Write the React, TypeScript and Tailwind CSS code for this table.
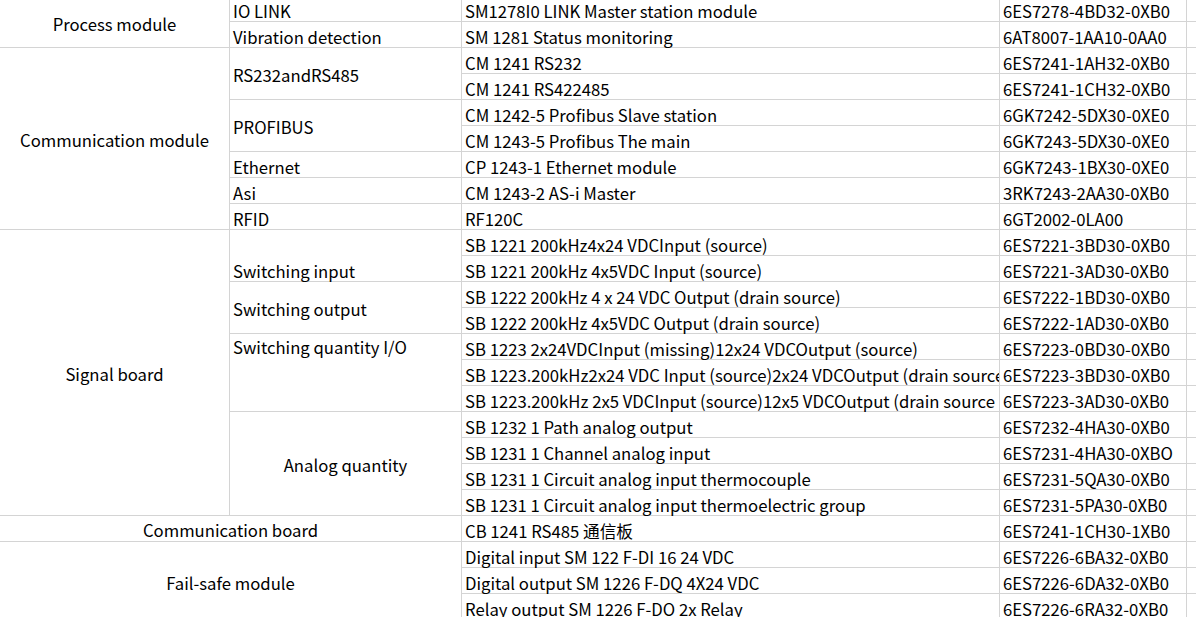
import React from "react";

type R = { c: string; d: string };

const rows: R[] = [
  { c: "SM1278I0 LINK Master station module", d: "6ES7278-4BD32-0XB0" },
  { c: "SM 1281 Status monitoring", d: "6AT8007-1AA10-0AA0" },
  { c: "CM 1241 RS232", d: "6ES7241-1AH32-0XB0" },
  { c: "CM 1241 RS422485", d: "6ES7241-1CH32-0XB0" },
  { c: "CM 1242-5 Profibus Slave station", d: "6GK7242-5DX30-0XE0" },
  { c: "CM 1243-5 Profibus The main", d: "6GK7243-5DX30-0XE0" },
  { c: "CP 1243-1 Ethernet module", d: "6GK7243-1BX30-0XE0" },
  { c: "CM 1243-2 AS-i Master", d: "3RK7243-2AA30-0XB0" },
  { c: "RF120C", d: "6GT2002-0LA00" },
  { c: "SB 1221 200kHz4x24 VDCInput (source)", d: "6ES7221-3BD30-0XB0" },
  { c: "SB 1221 200kHz 4x5VDC Input (source)", d: "6ES7221-3AD30-0XB0" },
  { c: "SB 1222 200kHz 4 x 24 VDC Output (drain source)", d: "6ES7222-1BD30-0XB0" },
  { c: "SB 1222 200kHz 4x5VDC Output (drain source)", d: "6ES7222-1AD30-0XB0" },
  { c: "SB 1223 2x24VDCInput (missing)12x24 VDCOutput (source)", d: "6ES7223-0BD30-0XB0" },
  { c: "SB 1223.200kHz2x24 VDC Input (source)2x24 VDCOutput (drain source)", d: "6ES7223-3BD30-0XB0" },
  { c: "SB 1223.200kHz 2x5 VDCInput (source)12x5 VDCOutput (drain source", d: "6ES7223-3AD30-0XB0" },
  { c: "SB 1232 1 Path analog output", d: "6ES7232-4HA30-0XB0" },
  { c: "SB 1231 1 Channel analog input", d: "6ES7231-4HA30-0XBO" },
  { c: "SB 1231 1 Circuit analog input thermocouple", d: "6ES7231-5QA30-0XB0" },
  { c: "SB 1231 1 Circuit analog input thermoelectric group", d: "6ES7231-5PA30-0XB0" },
  { c: "CB 1241 RS485 通信板", d: "6ES7241-1CH30-1XB0" },
  { c: "Digital input SM 122 F-DI 16 24 VDC", d: "6ES7226-6BA32-0XB0" },
  { c: "Digital output SM 1226 F-DQ 4X24 VDC", d: "6ES7226-6DA32-0XB0" },
  { c: "Relay output SM 1226 F-DO 2x Relay", d: "6ES7226-6RA32-0XB0" },
];

const cell = "border-r border-b border-[#d4d4d4] overflow-x-clip whitespace-nowrap";
const bottom = "flex items-end pl-[3px]";
const mid = "flex items-center pt-[3px]";

export default function App() {
  return (
    <div
      className="h-[617px] w-[1196px] overflow-hidden bg-white text-black text-[16.7px] leading-[19px]"
      style={{ fontFamily: '"Noto Sans CJK SC", "Noto Sans", sans-serif' }}
    >
      <div className="mt-[-4px] grid grid-cols-[230px_232px_538px_187px_1fr] grid-rows-[repeat(24,26px)]">
        {/* Column A / merged A+B */}
        <div className={`${cell} ${mid} col-start-1 row-start-1 row-span-2 justify-center pt-[5px]`}>Process module</div>
        <div className={`${cell} ${mid} col-start-1 row-start-3 row-span-7 justify-center`}>Communication module</div>
        <div className={`${cell} ${mid} col-start-1 row-start-10 row-span-11 justify-center`}>Signal board</div>
        <div className={`${cell} col-start-1 col-span-2 row-start-21 flex items-end justify-center pb-[1px]`}>Communication board</div>
        <div className={`${cell} ${mid} col-start-1 col-span-2 row-start-22 row-span-3 justify-center pt-[5px]`}>Fail-safe module</div>

        {/* Column B */}
        <div className={`${cell} ${bottom} col-start-2 row-start-1`}>IO LINK</div>
        <div className={`${cell} ${bottom} col-start-2 row-start-2`}>Vibration detection</div>
        <div className={`${cell} ${mid} col-start-2 row-start-3 row-span-2 pl-[3px]`}>RS232andRS485</div>
        <div className={`${cell} ${mid} col-start-2 row-start-5 row-span-2 pl-[3px]`}>PROFIBUS</div>
        <div className={`${cell} ${bottom} col-start-2 row-start-7`}>Ethernet</div>
        <div className={`${cell} ${bottom} col-start-2 row-start-8`}>Asi</div>
        <div className={`${cell} ${bottom} col-start-2 row-start-9`}>RFID</div>
        <div className={`${cell} ${bottom} col-start-2 row-start-10 row-span-2`}>Switching input</div>
        <div className={`${cell} ${mid} col-start-2 row-start-12 row-span-2 pl-[3px]`}>Switching output</div>
        <div className={`${cell} col-start-2 row-start-14 row-span-3 flex items-start pl-[3px] pt-[4px]`}>Switching quantity I/O</div>
        <div className={`${cell} ${mid} col-start-2 row-start-17 row-span-4 justify-center`}>Analog quantity</div>

        {/* Columns C, D, E */}
        {rows.map((r, i) => (
          <React.Fragment key={i}>
            <div className={`${cell} ${bottom} col-start-3`} style={{ gridRowStart: i + 1 }}>
              {r.c}
            </div>
            <div className={`${cell} ${bottom} col-start-4`} style={{ gridRowStart: i + 1 }}>
              {r.d}
            </div>
            <div className="border-b border-[#d4d4d4] col-start-5" style={{ gridRowStart: i + 1 }} />
          </React.Fragment>
        ))}
      </div>
    </div>
  );
}
